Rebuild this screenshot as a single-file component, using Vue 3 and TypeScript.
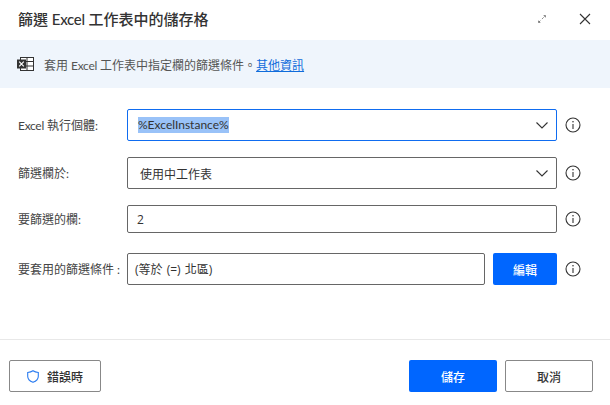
<script setup lang="ts">
const infoCount = 1
void infoCount
</script>

<template>
  <div class="dialog">
    <header class="head">
      <h1 class="title">篩選 <span class="en">Excel</span> 工作表中的儲存格</h1>
      <div class="win">
        <svg width="12" height="12" viewBox="0 0 12 12" class="expand"><path d="M2 10 L10 2" stroke="#777" stroke-width="1" stroke-dasharray="3 2.5" fill="none"/><path d="M7.5 1.5H10.5V4.5Z M1.5 7.5V10.5H4.5Z" fill="#666"/></svg>
        <svg width="12" height="12" viewBox="0 0 12 12"><path d="M1 1L11 11M11 1L1 11" stroke="#333" stroke-width="1.1" fill="none"/></svg>
      </div>
    </header>
    <div class="banner">
      <svg width="17" height="14" viewBox="0 0 17 14" class="xl">
        <rect x="3.5" y="0.5" width="13" height="13" fill="#fff" stroke="#333"/>
        <path d="M10 0.5V13.5M3.5 4.5H16.5M3.5 9H16.5" stroke="#333" fill="none"/>
        <rect x="0" y="2.5" width="9" height="9" fill="#333"/>
        <path d="M2.2 4.7L6.8 9.3M6.8 4.7L2.2 9.3" stroke="#fff" stroke-width="1.2" fill="none"/>
      </svg>
      <span>套用 <span class="en">Excel</span> 工作表中指定欄的篩選條件。</span><a class="link">其他資訊</a>
    </div>
    <main class="form">
      <div class="row">
        <label class="lab"><span class="en">Excel</span> 執行個體:</label>
        <div class="field focus">
          <span class="sel">%ExcelInstance%</span>
          <svg class="chev" width="12" height="7" viewBox="0 0 12 7"><path d="M0.5 0.5L6 6L11.5 0.5" stroke="#333" stroke-width="1.1" fill="none"/></svg>
        </div>
        <svg class="info" width="16" height="16" viewBox="0 0 16 16"><circle cx="8" cy="8" r="7" fill="none" stroke="#333" stroke-width="1.1"/><path d="M8 7V12" stroke="#333" stroke-width="1.1"/><circle cx="8" cy="4.8" r="0.8" fill="#333"/></svg>
      </div>
      <div class="row">
        <label class="lab">篩選欄於:</label>
        <div class="field">
          <span class="val opt">使用中工作表</span>
          <svg class="chev" width="12" height="7" viewBox="0 0 12 7"><path d="M0.5 0.5L6 6L11.5 0.5" stroke="#333" stroke-width="1.1" fill="none"/></svg>
        </div>
        <svg class="info" width="16" height="16" viewBox="0 0 16 16"><circle cx="8" cy="8" r="7" fill="none" stroke="#333" stroke-width="1.1"/><path d="M8 7V12" stroke="#333" stroke-width="1.1"/><circle cx="8" cy="4.8" r="0.8" fill="#333"/></svg>
      </div>
      <div class="row short">
        <label class="lab">要篩選的欄:</label>
        <div class="field"><span class="val num">2</span></div>
        <svg class="info" width="16" height="16" viewBox="0 0 16 16"><circle cx="8" cy="8" r="7" fill="none" stroke="#333" stroke-width="1.1"/><path d="M8 7V12" stroke="#333" stroke-width="1.1"/><circle cx="8" cy="4.8" r="0.8" fill="#333"/></svg>
      </div>
      <div class="row">
        <label class="lab">要套用的篩選條件 :</label>
        <div class="field"><span class="val cond">(等於 (=) 北區)</span></div>
        <button class="btn primary edit">編輯</button>
        <svg class="info" width="16" height="16" viewBox="0 0 16 16"><circle cx="8" cy="8" r="7" fill="none" stroke="#333" stroke-width="1.1"/><path d="M8 7V12" stroke="#333" stroke-width="1.1"/><circle cx="8" cy="4.8" r="0.8" fill="#333"/></svg>
      </div>
    </main>
    <footer class="foot">
      <button class="btn ghost err">
        <svg width="12" height="13" viewBox="0 0 12 13"><path d="M6 0.8C7.5 1.9 9.2 2.4 11.3 2.5V6.3C11.3 9.2 9.3 11.2 6 12.3C2.7 11.2 0.7 9.2 0.7 6.3V2.5C2.8 2.4 4.5 1.9 6 0.8Z" fill="none" stroke="#2b7cf0" stroke-width="1.1"/></svg>
        <span>錯誤時</span>
      </button>
      <div class="spacer"></div>
      <button class="btn primary wide">儲存</button>
      <button class="btn ghost wide">取消</button>
    </footer>
  </div>
</template>

<style>
html, body { margin: 0; background: #fff; }
</style>

<style scoped>
.dialog {
  width: 610px;
  height: 405px;
  display: flex;
  flex-direction: column;
  background: #fff;
  color: #333;
  font-family: Lato, "Noto Sans CJK TC", sans-serif;
  font-size: 12px;
  overflow: hidden;
}
.en { letter-spacing: -0.3px; }
.head {
  height: 40px;
  display: flex;
  align-items: center;
  justify-content: space-between;
  padding: 0 19px 3px 18px;
  box-sizing: border-box;
}
.title {
  margin: 0;
  font-size: 15px;
  font-weight: 500;
  color: #333;
  line-height: 20px;
}
.win { display: flex; align-items: center; gap: 32px; }
.expand { width: 10px; height: 10px; }
.banner {
  height: 48px;
  background: #eff5fc;
  display: flex;
  align-items: center;
  padding-left: 17px;
  box-sizing: border-box;
  color: #555;
}
.xl { margin-right: 10px; }
.link { color: #0f6cdb; text-decoration: underline; }
.form {
  flex: 1;
  padding: 21px 0 0 18px;
  display: flex;
  flex-direction: column;
  gap: 16px;
}
.row { display: flex; align-items: center; height: 32px; }
.row.short { height: 28px; margin-bottom: 4px; }
.lab { width: 109px; flex: none; color: #444; margin-top: -2px; white-space: nowrap; }
.field {
  flex: 1;
  height: 100%;
  box-sizing: border-box;
  border: 1px solid #666;
  border-radius: 2px;
  display: flex;
  align-items: center;
  justify-content: space-between;
  padding: 0 8px 0 10px;
  min-width: 0;
}
.focus { border-color: #0f6cf0; }
.sel { background: #99c2f8; color: #333; line-height: 16px; font-size: 12px; }
.val { color: #333; }
.opt { margin-left: 2px; }
.cond { margin-left: -3px; word-spacing: 1px; font-family: "Open Sans", "Noto Sans CJK TC", sans-serif; }
.num { margin-left: -1px; font-family: "Open Sans", sans-serif; }
.chev { flex: none; }
.info { flex: none; margin: 0 29px 0 8px; }
.btn {
  font-family: inherit;
  font-size: 12px;
  font-weight: 500;
  border-radius: 2px;
  box-sizing: border-box;
  cursor: default;
}
.primary { background: #0066ff; color: #fff; border: none; }
.edit { width: 64px; height: 32px; margin-left: 8px; flex: none; }
.foot {
  height: 66px;
  border-top: 1px solid #e8e8e8;
  box-sizing: border-box;
  display: flex;
  align-items: flex-start;
  gap: 8px;
  padding: 20px 17px 0 9px;
}
.ghost { background: #fff; color: #333; border: 1px solid #888; }
.err {
  width: 92px;
  height: 32px;
  display: flex;
  align-items: center;
  justify-content: center;
  gap: 8px;
}
.spacer { flex: 1; }
.wide { width: 88px; height: 32px; }
</style>
